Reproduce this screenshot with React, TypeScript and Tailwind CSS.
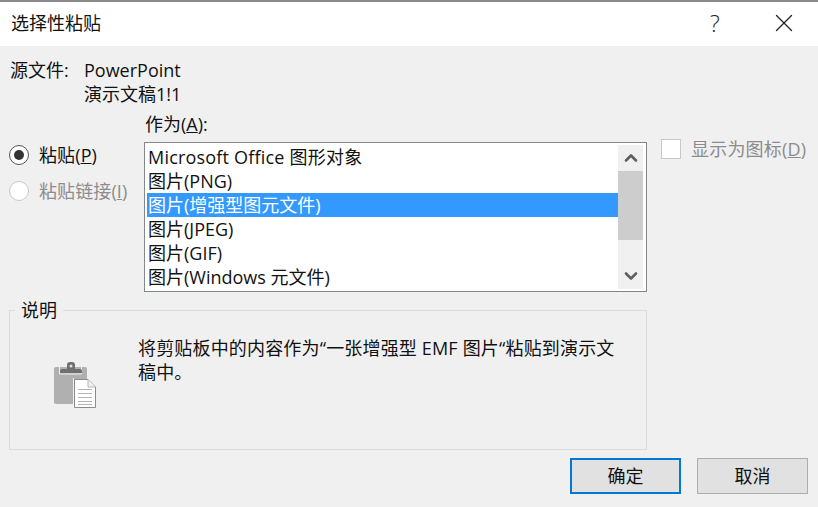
import React from 'react';
import { ChevronDown, ChevronUp, X } from 'lucide-react';

const FONT = "font-['Open_Sans','Noto_Sans_CJK_SC',sans-serif]";

const formats = [
  'Microsoft Office 图形对象',
  '图片(PNG)',
  '图片(增强型图元文件)',
  '图片(JPEG)',
  '图片(GIF)',
  '图片(Windows 元文件)',
];

const PasteIcon = () => (
  <svg width="42" height="46" viewBox="0 0 42 46" className="mt-[40px] ml-[44px] shrink-0">
    <rect x="0" y="5" width="33" height="37" rx="2" fill="#b0b0b0" />
    <path d="M5.5 5 V12 H27.5 V5" fill="none" stroke="#f0f0f0" strokeWidth="1" />
    <path d="M6 11 V9 a2 2 0 0 1 2 -2 h5 V3 a3 3 0 0 1 3 -3 h2 a3 3 0 0 1 3 3 V7 h5 a2 2 0 0 1 2 2 V11 Z" fill="#707070" />
    <circle cx="17" cy="4" r="1.5" fill="#e0e0e0" />
    <path d="M20.5 17.5 H34 L41.5 25 V45.5 H20.5 Z" fill="#fff" stroke="#8a8a8a" strokeWidth="1" />
    <path d="M19.5 16 V46" stroke="#f0f0f0" strokeWidth="1" />
    <path d="M34 17.5 V25 H41.5" fill="#f0f0f0" stroke="#b4b4b4" strokeWidth="1" />
    <path d="M24 27.5 H38 M24 31.5 H38 M24 35.5 H38 M24 39.5 H38 M24 42.5 H38" stroke="#b4b4b4" strokeWidth="1" />
  </svg>
);

const Radio = ({ label, hot, on = false }: { label: string; hot: string; on?: boolean }) => (
  <div className={`flex h-6 items-center gap-[10px] ${on ? 'text-[#111]' : 'text-[#8c8c8c]'}`}>
    <span className={`flex h-5 w-5 items-center justify-center rounded-full border bg-white ${on ? 'border-[#555]' : 'border-[#c8c8c8]'}`}>
      {on && <span className="h-[10px] w-[10px] rounded-full bg-[#333]" />}
    </span>
    <span className="tracking-[0.1px]">
      {label}(<u>{hot}</u>)
    </span>
  </div>
);

export default function App() {
  return (
    <div className={`${FONT} flex h-[507px] w-[818px] flex-col overflow-hidden bg-[#f0f0f0] text-[18px] leading-6 text-[#111]`}>
      <header className="flex h-[46px] shrink-0 items-center border-t-2 border-[#8a8a8a] bg-white pb-[2px] pl-[11px]">
        <span className="flex-1">选择性粘贴</span>
        <span className="w-[59px] text-[23px] font-light text-[#222]">?</span>
        <X className="mr-[19px] h-[30px] w-[30px] text-[#222]" strokeWidth={1} absoluteStrokeWidth />
      </header>

      <div className="flex pt-3 pl-[10px]">
        <span className="w-[74px]">源文件:</span>
        <div>
          <div>PowerPoint</div>
          <div>演示文稿1!1</div>
        </div>
      </div>

      <div className="flex pt-[6px] pl-[9px]">
        <div className="flex w-[135px] flex-col gap-3 pt-[31px]">
          <Radio label="粘贴" hot="P" on />
          <Radio label="粘贴链接" hot="I" />
        </div>

        <div className="w-[503px]">
          <div className="h-[30px] pl-px">
            作为(<u>A</u>):
          </div>
          <div className="flex h-[150px] border border-[#82878c] bg-white py-[2px] pr-[3px] pl-[2px]">
            <ul className="w-[472px]">
              {formats.map((f, i) => (
                <li key={f} className={`h-6 pl-px ${i === 0 ? 'tracking-[0.2px]' : ''} ${i === 2 ? 'bg-[#3399ff] text-white' : ''}`}>
                  {f}
                </li>
              ))}
            </ul>
            <div className="flex h-[144px] w-[25px] flex-col bg-[#f0f0f0] text-[#606060]">
              <div className="flex h-[26px] items-center justify-center">
                <ChevronUp className="h-5 w-5" strokeWidth={3.2} />
              </div>
              <div className="h-[69px] bg-[#cdcdcd]" />
              <div className="flex-1" />
              <div className="flex h-[26px] items-center justify-center">
                <ChevronDown className="h-5 w-5" strokeWidth={3.2} />
              </div>
            </div>
          </div>
        </div>

        <div className="flex items-start gap-[10px] pt-[25px] pl-[14px] text-[#8c8c8c]">
          <span className="mt-[2px] h-5 w-5 border border-[#c8c8c8] bg-white" />
          <span className="tracking-[0.2px] whitespace-nowrap">
            显示为图标(<u>D</u>)
          </span>
        </div>
      </div>

      <fieldset className="mt-[6px] ml-[9px] h-[152px] w-[638px] border border-[#dcdcdc] pr-0 pl-0">
        <legend className="ml-[5px] px-[6px]">说明</legend>
        <div className="flex">
          <PasteIcon />
          <p className="pt-[14px] pl-[42px] tracking-[0.17px] whitespace-nowrap">
            将剪贴板中的内容作为“一张增强型 EMF 图片“粘贴到演示文
            <br />
            稿中。
          </p>
        </div>
      </fieldset>

      <div className="mt-[8px] flex gap-4 pl-[570px]">
        <button className="h-9 w-[111px] border-2 border-[#0078d7] bg-[#e1e1e1]">确定</button>
        <button className="h-9 w-[111px] border border-[#adadad] bg-[#e1e1e1]">取消</button>
      </div>
    </div>
  );
}
